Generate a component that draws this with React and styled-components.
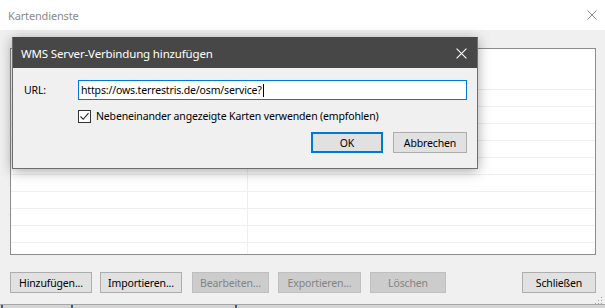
import styled, { createGlobalStyle } from "styled-components";

const GlobalStyle = createGlobalStyle`
  html, body {
    margin: 0;
    padding: 0;
    background: #f0f0f0;
  }
  body {
    font-family: "Noto Sans", "Open Sans", sans-serif;
    font-size: 10.5px;
    letter-spacing: -0.15px;
    color: #000;
  }
`;

const Window = styled.div`
  position: relative;
  width: 605px;
  height: 308px;
  display: flex;
  flex-direction: column;
  overflow: hidden;
  background: #f0f0f0;
`;

const TitleBar = styled.div`
  height: 30px;
  flex: none;
  display: flex;
  align-items: center;
  justify-content: space-between;
  padding: 0 8px;
  background: #fff;
  color: #8a8a8a;
  font-size: 11px;
`;

const CloseIcon = ({ color, size }) => (
  <svg width={size} height={size} viewBox="0 0 10 10">
    <path d="M0.5 0.5 L9.5 9.5 M9.5 0.5 L0.5 9.5" stroke={color} strokeWidth="1" />
  </svg>
);

const Body = styled.div`
  flex: 1;
  display: flex;
  flex-direction: column;
  padding: 18px 9px 0 10px;
`;

const ListBox = styled.div`
  height: 207px;
  box-sizing: border-box;
  border: 1px solid #8c8c8c;
  background: #fff;
  display: flex;
  flex-direction: column;
  overflow: hidden;
`;

const HeaderSpace = styled.div`
  height: 24px;
  flex: none;
`;

const Row = styled.div`
  height: 17px;
  flex: none;
  box-sizing: border-box;
  display: grid;
  grid-template-columns: 237px 1fr;
  border-bottom: 1px solid #efefef;
`;

const Cell = styled.div`
  border-right: ${(p) => (p.$first ? "1px solid #efefef" : "none")};
`;

const ButtonRow = styled.div`
  display: flex;
  align-items: center;
  margin-top: 17px;
  gap: 9px;
`;

const Button = styled.button`
  width: ${(p) => p.$w}px;
  height: 21px;
  box-sizing: border-box;
  padding: 0;
  font-family: inherit;
  font-size: 10.5px;
  letter-spacing: inherit;
  border: 1px solid ${(p) => (p.disabled ? "#bfbfbf" : "#adadad")};
  background: ${(p) => (p.disabled ? "#cccccc" : "#e1e1e1")};
  color: ${(p) => (p.disabled ? "#838383" : "#000")};
  margin-left: ${(p) => p.$ml || 0}px;
`;

const Spacer = styled.div`
  flex: 1;
`;

const BottomEdge = styled.div`
  height: 3px;
  flex: none;
  margin-top: auto;
  border-top: 1px solid #a6a6a6;
  background:
    linear-gradient(#3c5a80, #3c5a80) 1px 0 / 2px 3px no-repeat,
    linear-gradient(#3c5a80, #3c5a80) 71px 0 / 2px 3px no-repeat,
    linear-gradient(#3c5a80, #3c5a80) 235px 0 / 2px 3px no-repeat,
    #d4d4d4;
`;

const Grip = styled.div`
  position: absolute;
  right: 3px;
  bottom: 4px;
  width: 8px;
  height: 8px;
  background:
    radial-gradient(circle, #a0a0a0 0.8px, transparent 1px) 0 0 / 3px 3px;
  clip-path: polygon(100% 0, 100% 100%, 0 100%);
`;

const Dialog = styled.div`
  position: absolute;
  left: 12px;
  top: 37px;
  width: 466px;
  height: 132px;
  box-sizing: border-box;
  display: flex;
  flex-direction: column;
  background: #f0f0f0;
  border: 1px solid #6e6e6e;
  border-top-color: #474747;
  box-shadow: 0 2px 12px rgba(0, 0, 0, 0.35);
`;

const DialogTitle = styled.div`
  height: 30px;
  flex: none;
  display: flex;
  align-items: center;
  justify-content: space-between;
  padding: 0 10px 0 8px;
  background: #474747;
  color: #fff;
  font-size: 11.5px;
`;

const DialogBody = styled.div`
  flex: 1;
  display: flex;
  flex-direction: column;
  padding: 12px 10px 0 11px;
`;

const UrlRow = styled.div`
  display: flex;
  align-items: center;
  height: 20px;
`;

const Label = styled.span`
  width: 54px;
`;

const UrlInput = styled.div`
  width: 389px;
  height: 20px;
  box-sizing: border-box;
  border: 1px solid #0078d7;
  background: #fff;
  display: flex;
  align-items: center;
  padding-left: 2px;
`;

const Caret = styled.span`
  display: inline-block;
  width: 1px;
  height: 13px;
  background: #000;
  margin-left: 1px;
`;

const CheckRow = styled.label`
  display: flex;
  align-items: center;
  gap: 5px;
  margin: 9px 0 0 54px;
  height: 14px;
`;

const CheckBox = styled.span`
  width: 13px;
  height: 13px;
  box-sizing: border-box;
  border: 1px solid #333;
  background: #fff;
  display: flex;
  align-items: center;
  justify-content: center;
`;

const DialogButtons = styled.div`
  display: flex;
  justify-content: flex-end;
  gap: 10px;
  margin-top: 9px;
`;

const DialogButton = styled(Button)`
  border: ${(p) => (p.$default ? "2px solid #0078d7" : "1px solid #adadad")};
`;

const rows = Array.from({ length: 11 });

export default function App() {
  return (
    <>
      <GlobalStyle />
      <Window>
        <TitleBar>
          <span>Kartendienste</span>
          <CloseIcon color="#8a8a8a" size={10} />
        </TitleBar>
        <Body>
          <ListBox>
            <HeaderSpace />
            {rows.map((_, i) => (
              <Row key={i}>
                <Cell $first />
                <Cell />
              </Row>
            ))}
          </ListBox>
          <ButtonRow>
            <Button $w={82}>Hinzufügen...</Button>
            <Button $w={82} $ml={-1}>Importieren...</Button>
            <Button $w={77} $ml={1} disabled>Bearbeiten...</Button>
            <Button $w={83} disabled>Exportieren...</Button>
            <Button $w={76} disabled>Löschen</Button>
            <Spacer />
            <Button $w={74}>Schließen</Button>
          </ButtonRow>
        </Body>
        <BottomEdge />
        <Grip />
        <Dialog>
          <DialogTitle>
            <span>WMS Server-Verbindung hinzufügen</span>
            <CloseIcon color="#fff" size={11} />
          </DialogTitle>
          <DialogBody>
            <UrlRow>
              <Label>URL:</Label>
              <UrlInput>
                https://ows.terrestris.de/osm/service?
                <Caret />
              </UrlInput>
            </UrlRow>
            <CheckRow>
              <CheckBox>
                <svg width="11" height="11" viewBox="0 0 11 11">
                  <path d="M1.5 5.5 L4.2 8.3 L9.5 2.2" fill="none" stroke="#222" strokeWidth="1.1" />
                </svg>
              </CheckBox>
              <span>Nebeneinander angezeigte Karten verwenden (empfohlen)</span>
            </CheckRow>
            <DialogButtons>
              <DialogButton $w={72} $default>OK</DialogButton>
              <DialogButton $w={74}>Abbrechen</DialogButton>
            </DialogButtons>
          </DialogBody>
        </Dialog>
      </Window>
    </>
  );
}
